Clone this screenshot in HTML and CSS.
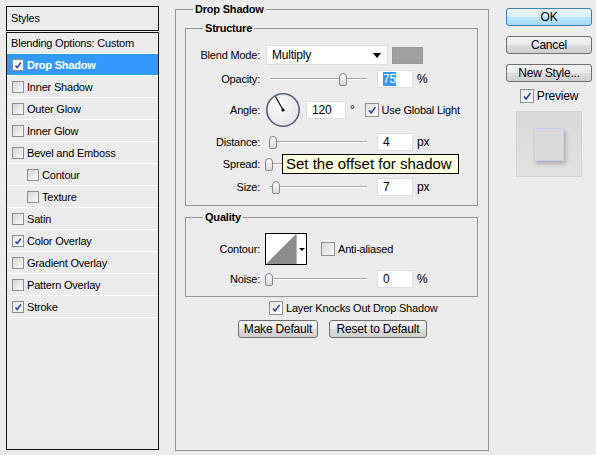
FILE: index.html
```html
<!DOCTYPE html>
<html lang="en">
<head>
  <meta charset="UTF-8">
  <title>Layer Style</title>
  <link rel="stylesheet" href="styles.css">
</head>
<body>
  <div class="dialog">
    <div class="styles-panel">
      <div class="styles-head">Styles</div>
      <ul class="style-list">
        <li class="style-item plain">Blending Options: Custom</li>
        <li class="style-item selected"><span class="check small on"><svg viewBox="0 0 12 12"><path d="M3 6.5 L5 9 L9.5 3"/></svg></span>Drop Shadow</li>
        <li class="style-item"><span class="check small"></span>Inner Shadow</li>
        <li class="style-item"><span class="check small"></span>Outer Glow</li>
        <li class="style-item"><span class="check small"></span>Inner Glow</li>
        <li class="style-item"><span class="check small"></span>Bevel and Emboss</li>
        <li class="style-item indent"><span class="check small"></span>Contour</li>
        <li class="style-item indent"><span class="check small"></span>Texture</li>
        <li class="style-item"><span class="check small"></span>Satin</li>
        <li class="style-item"><span class="check small on"><svg viewBox="0 0 12 12"><path d="M3 6.5 L5 9 L9.5 3"/></svg></span>Color Overlay</li>
        <li class="style-item"><span class="check small"></span>Gradient Overlay</li>
        <li class="style-item"><span class="check small"></span>Pattern Overlay</li>
        <li class="style-item"><span class="check small on"><svg viewBox="0 0 12 12"><path d="M3 6.5 L5 9 L9.5 3"/></svg></span>Stroke</li>
      </ul>
    </div>

    <fieldset class="group main-group">
      <legend>Drop Shadow</legend>

      <fieldset class="group sub-group structure">
        <legend>Structure</legend>

        <div class="row blend-row">
          <span class="row-label">Blend Mode:</span>
          <div class="select">Multiply<span class="arrow"></span></div>
          <span class="swatch"></span>
        </div>

        <div class="row">
          <span class="row-label">Opacity:</span>
          <div class="slider"><span class="thumb" style="left: 74px;"></span></div>
          <span class="field"><span class="sel">75</span></span>
          <span class="unit">%</span>
        </div>

        <div class="row angle-row">
          <span class="row-label">Angle:</span>
          <svg class="dial" viewBox="0 0 36 36">
            <defs>
              <radialGradient id="dialFill" cx="0.4" cy="0.35" r="0.7">
                <stop offset="0" stop-color="#ffffff"/>
                <stop offset="1" stop-color="#e2e2e4"/>
              </radialGradient>
            </defs>
            <circle cx="18" cy="18" r="16.2" fill="url(#dialFill)" stroke="#56627e" stroke-width="1.6"/>
            <line x1="18" y1="18" x2="10.5" y2="4.5" stroke="#000" stroke-width="1.2"/>
            <circle cx="18" cy="18" r="1.6" fill="#000"/>
          </svg>
          <span class="field wide">120</span>
          <span class="deg">°</span>
          <label class="opt global"><span class="check on"><svg viewBox="0 0 14 14"><path d="M3.5 7.5 L6 10.5 L11 3.5"/></svg></span>Use Global Light</label>
        </div>

        <div class="row">
          <span class="row-label">Distance:</span>
          <div class="slider"><span class="thumb" style="left: 4px;"></span></div>
          <span class="field">4</span>
          <span class="unit">px</span>
        </div>

        <div class="row spread-row">
          <span class="row-label">Spread:</span>
          <div class="slider"><span class="thumb" style="left: 0px;"></span></div>
          <div class="tooltip">Set the offset for shadow</div>
        </div>

        <div class="row">
          <span class="row-label">Size:</span>
          <div class="slider"><span class="thumb" style="left: 7px;"></span></div>
          <span class="field">7</span>
          <span class="unit">px</span>
        </div>
      </fieldset>

      <fieldset class="group sub-group quality">
        <legend>Quality</legend>

        <div class="row contour-row">
          <span class="row-label">Contour:</span>
          <div class="contour">
            <svg class="curve" viewBox="0 0 30 30"><polygon points="0,30 30,0 30,30" fill="#8c8c8c"/></svg>
            <span class="contour-drop"><span class="arrow small"></span></span>
          </div>
          <label class="opt anti"><span class="check"></span>Anti-aliased</label>
        </div>

        <div class="row">
          <span class="row-label">Noise:</span>
          <div class="slider"><span class="thumb" style="left: 0px;"></span></div>
          <span class="field">0</span>
          <span class="unit">%</span>
        </div>
      </fieldset>

      <label class="opt knock"><span class="check on"><svg viewBox="0 0 14 14"><path d="M3.5 7.5 L6 10.5 L11 3.5"/></svg></span>Layer Knocks Out Drop Shadow</label>

      <div class="defaults">
        <button class="btn make">Make Default</button>
        <button class="btn reset">Reset to Default</button>
      </div>
    </fieldset>

    <div class="side">
      <button class="btn side-btn ok">OK</button>
      <button class="btn side-btn">Cancel</button>
      <button class="btn side-btn">New Style...</button>
      <label class="opt preview-check"><span class="check on"><svg viewBox="0 0 14 14"><path d="M3.5 7.5 L6 10.5 L11 3.5"/></svg></span>Preview</label>
      <div class="preview"><span class="preview-square"></span></div>
    </div>
  </div>
</body>
</html>
```

FILE: styles.css
```css
* {
  box-sizing: border-box;
}
body {
  margin: 0;
  background: #ececec;
  font-family: "Liberation Sans", Arial, sans-serif;
  font-size: 11px;
  letter-spacing: -0.2px;
  color: #000;
}
.dialog {
  display: flex;
  align-items: flex-start;
  width: 596px;
  height: 455px;
}

/* left list */
.styles-panel {
  width: 153px;
  height: 444px;
  margin: 6px 0 0 6px;
  display: flex;
  flex-direction: column;
}
.styles-head {
  height: 25px;
  border: 1px solid #111;
  padding-left: 4px;
  line-height: 23px;
}
.style-list {
  flex: 1;
  margin: 1px 0 0;
  padding: 0;
  list-style: none;
  border: 1px solid #111;
}
.style-item {
  height: 22px;
  border-bottom: 1px solid #fff;
  display: flex;
  align-items: center;
  gap: 3px;
  padding-left: 5px;
}
.style-item.plain {
  height: 21px;
  padding-left: 4px;
}
.style-item.indent {
  padding-left: 20px;
}
.style-item.selected {
  background: #3399ff;
  color: #fff;
  font-weight: bold;
}

/* checkboxes */
.check {
  display: inline-flex;
  flex: none;
  width: 14px;
  height: 14px;
  border: 1px solid #8e8f8f;
  background: linear-gradient(135deg, #d6d6d6, #fbfbfb);
}
.check.small {
  width: 12px;
  height: 12px;
}
.check.on {
  background: linear-gradient(135deg, #e4e4e4, #fff);
}
.selected .check {
  background: #fff;
}
.check svg {
  width: 100%;
  height: 100%;
}
.check path {
  fill: none;
  stroke: #2a4694;
  stroke-width: 1.8;
}
.opt {
  display: flex;
  align-items: center;
  gap: 3px;
}

/* group boxes */
.group {
  border: 1px solid #959595;
  margin: 0;
  padding: 0;
  min-width: 0;
}
.group legend {
  font-weight: bold;
  line-height: 14px;
  padding: 0 2px;
  margin-left: 17px;
}
.main-group {
  width: 314px;
  height: 449px;
  margin: 2px 0 0 16px;
  padding: 0 0 0 9px;
}
.main-group > legend {
  margin-left: 8px;
}
.sub-group {
  width: 293px;
}
.structure {
  margin-top: 5px;
  padding-bottom: 9px;
}
.quality {
  margin-top: 4px;
  padding-bottom: 8px;
}

/* rows */
.row {
  display: flex;
  align-items: center;
  height: 18px;
  margin-top: 5px;
}
.row-label {
  flex: none;
  width: 74px;
  margin-right: 5px;
  text-align: right;
}
.blend-row {
  height: 20px;
  margin-top: 10px;
}
.select {
  width: 122px;
  height: 20px;
  margin-left: 1px;
  padding: 0 6px 0 5px;
  background: #fff;
  border: 1px solid #dedede;
  display: flex;
  align-items: center;
  justify-content: space-between;
  font-size: 12px;
}
.arrow {
  width: 0;
  height: 0;
  border-left: 4px solid transparent;
  border-right: 4px solid transparent;
  border-top: 5px solid #000;
}
.arrow.small {
  border-left-width: 3px;
  border-right-width: 3px;
  border-top-width: 3px;
}
.swatch {
  width: 31px;
  height: 17px;
  margin-left: 4px;
  background: #a29f9f;
  border: 1px solid #999797;
}
.slider {
  position: relative;
  flex: none;
  width: 105px;
  height: 18px;
}
.slider::before {
  content: "";
  position: absolute;
  left: 5px;
  right: 3px;
  top: 8px;
  height: 1px;
  background: #a5a5a5;
  box-shadow: 0 1px 0 #fff;
}
.thumb {
  position: absolute;
  top: 3px;
  width: 8px;
  height: 13px;
  border: 1px solid #878787;
  border-radius: 4px 4px 2px 2px;
  background: linear-gradient(#fdfdfd, #d9d9d9);
}
.field {
  flex: none;
  width: 36px;
  height: 18px;
  margin-left: 7px;
  padding-left: 5px;
  background: #fff;
  border: 1px solid #dedede;
  font-size: 12px;
  line-height: 16px;
}
.field.wide {
  width: 40px;
  margin-left: 5px;
}
.sel {
  background: #3399ff;
  color: #fff;
}
.unit {
  margin-left: 4px;
  font-size: 12px;
}
.angle-row {
  height: 36px;
  margin-top: 4px;
}
.dial {
  flex: none;
  width: 36px;
  height: 36px;
}
.deg {
  margin-left: 4px;
  font-size: 12px;
}
.global {
  margin-left: 10px;
}
.spread-row {
  position: relative;
  margin-top: 4px;
}
.tooltip {
  position: absolute;
  left: 96px;
  top: -1px;
  width: 177px;
  height: 20px;
  padding-left: 3px;
  background: #ffffe1;
  border: 1px solid #000;
  font-size: 15px;
  line-height: 18px;
  letter-spacing: 0;
}
.contour-row {
  height: 32px;
  margin-top: 9px;
}
.contour {
  display: flex;
  width: 42px;
  height: 32px;
  border: 1px solid #000;
  background: #fff;
}
.curve {
  width: 30px;
  height: 30px;
}
.contour-drop {
  flex: 1;
  display: flex;
  align-items: center;
  justify-content: center;
  border-left: 1px solid #b5b5b5;
}
.anti {
  margin-left: 14px;
}
.knock {
  height: 15px;
  margin: 3px 0 0 84px;
}

/* buttons */
.btn {
  height: 18px;
  padding: 0;
  border: 1px solid #707070;
  border-radius: 3px;
  background: linear-gradient(#f2f2f2 0%, #ebebeb 50%, #dddddd 50%, #cfcfcf 100%);
  font-family: inherit;
  font-size: 12px;
  letter-spacing: -0.2px;
  color: #000;
}
.defaults {
  display: flex;
  gap: 11px;
  margin: 5px 0 0 53px;
}
.make {
  width: 80px;
}
.reset {
  width: 98px;
}
.side {
  width: 86px;
  margin: 8px 0 0 17px;
  display: flex;
  flex-direction: column;
  align-items: center;
}
.side-btn {
  width: 86px;
  margin-bottom: 10px;
}
.ok {
  border-color: #3c7fb1;
  background: linear-gradient(#eaf6fd 0%, #d9f0fc 50%, #bee6fd 50%, #a7d9f5 100%);
}
.preview-check {
  height: 15px;
  margin-top: -4px;
  font-size: 12px;
}
.preview {
  width: 66px;
  height: 66px;
  margin-top: 8px;
  display: flex;
  align-items: center;
  justify-content: center;
  background: linear-gradient(#d9d9d9, #e2e2e2);
  border: 1px solid #d2d2d2;
}
.preview-square {
  width: 30px;
  height: 33px;
  background: #dadada;
  border: 1px solid #c7cff3;
  box-shadow: 2px 3px 4px rgba(0, 0, 0, 0.22);
}
```
